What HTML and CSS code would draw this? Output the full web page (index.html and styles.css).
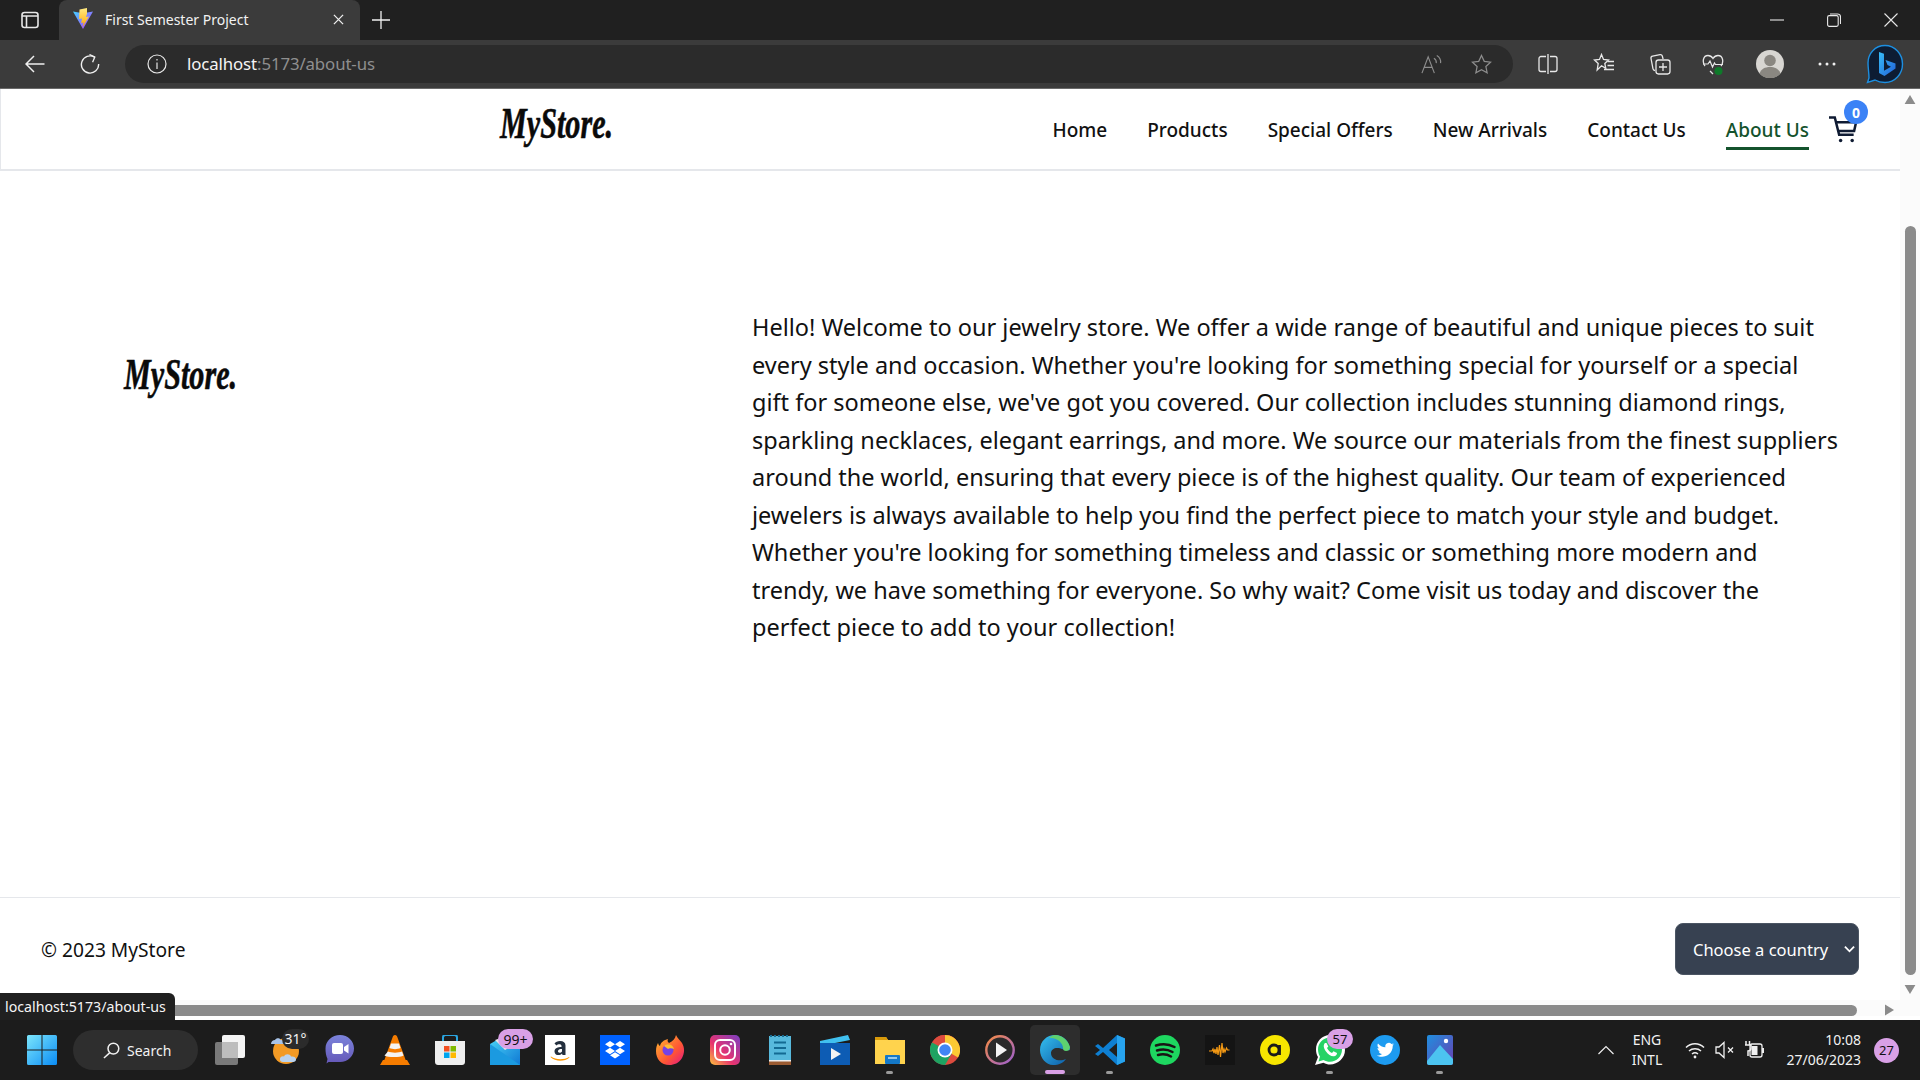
FILE: index.html
```html
<!DOCTYPE html>
<html lang="en">
<head>
<meta charset="utf-8">
<title>First Semester Project</title>
<link rel="stylesheet" href="styles.css">
</head>
<body>
<div class="browser">
  <div class="tabstrip">
    <svg class="tab-toggle" viewBox="0 0 18 18" fill="none" stroke="#e8e8e8" stroke-width="1.6"><rect x="1" y="1.5" width="16" height="15" rx="2.5"/><path d="M1 5h16M5.5 5v11" /></svg>
    <div class="tab">
      <svg class="favicon" viewBox="0 0 20 22"><defs><linearGradient id="vite1" x1="0" y1="0" x2="1" y2="1"><stop offset="0" stop-color="#41d1ff"/><stop offset="1" stop-color="#bd34fe"/></linearGradient><linearGradient id="vite2" x1="0" y1="0" x2="0" y2="1"><stop offset="0" stop-color="#ffea83"/><stop offset="1" stop-color="#ffa800"/></linearGradient></defs><path d="M0 3.5 10 21 20 3.5 10 5.2z" fill="url(#vite1)"/><path d="M14 0 6.5 1.5 6 11l3-.6-.8 4.5 2.4-.5L9.5 19 16 8.5l-3 .6 1-3.4z" fill="url(#vite2)"/></svg>
      <span class="tab-title">First Semester Project</span>
      <svg class="tab-close" viewBox="0 0 12 12" stroke="#f0f0f0" stroke-width="1.4"><path d="M1 1l10 10M11 1 1 11"/></svg>
    </div>
    <svg class="new-tab" viewBox="0 0 18 18" stroke="#f0f0f0" stroke-width="1.3"><path d="M9 0v18M0 9h18"/></svg>
    <div class="win-controls">
      <svg viewBox="0 0 14 14" stroke="#e8e8e8" stroke-width="1.1" fill="none"><path d="M0 7h14"/></svg>
      <svg viewBox="0 0 14 14" stroke="#e8e8e8" stroke-width="1.1" fill="none"><rect x="0.6" y="2.6" width="10.6" height="10.8" rx="1.6"/><path d="M3 1h7.5a3 3 0 0 1 3 3v7"/></svg>
      <svg viewBox="0 0 14 14" stroke="#e8e8e8" stroke-width="1.1" fill="none"><path d="M0.5 0.5l13 13M13.5 0.5l-13 13"/></svg>
    </div>
  </div>

  <div class="toolbar">
    <svg class="nav-btn" viewBox="0 0 20 20" stroke="#f0f0f0" stroke-width="1.5" fill="none"><path d="M19.5 10H1M9 2 1 10l8 8"/></svg>
    <svg class="nav-btn reload" viewBox="0 0 20 20" stroke="#f0f0f0" stroke-width="1.4" fill="none"><path d="M14.5 3.2A8.6 8.6 0 1 0 18.6 10"/><path d="M9.5 0.5 14.8 3l-2.2 5.2" stroke-width="1.3"/></svg>
    <div class="address">
      <svg class="info" viewBox="0 0 20 20" stroke="#e8e8e8" stroke-width="1.2" fill="none"><circle cx="10" cy="10" r="9"/><path d="M10 8.5V15"/><path d="M10 5v1.4"/></svg>
      <span class="url"><span class="url-host">localhost</span>:5173/about-us</span>
      <svg class="addr-icon read" viewBox="0 0 22 22" stroke="#8d8d8d" stroke-width="1.2" fill="none"><path d="M1 20 7.5 3 14 20M3.5 14h8"/><path d="M13.500 4.500a5 5 0 0 1 2.500 5M16.500 1.500a8 8 0 0 1 4 8"/></svg>
      <svg class="addr-icon star" viewBox="0 0 22 22" stroke="#8d8d8d" stroke-width="1.3" fill="none"><path d="M11 1.5l2.9 6.2 6.6.8-4.9 4.6 1.3 6.7L11 16.5l-5.9 3.3 1.3-6.7L1.5 8.5l6.6-.8z"/></svg>
    </div>
    <div class="tool-icons">
      <svg class="tool" viewBox="0 0 22 22" stroke="#e8e8e8" stroke-width="1.3" fill="none"><path d="M9 3.5H4a2 2 0 0 0-2 2v11a2 2 0 0 0 2 2h5M13 3.5h5a2 2 0 0 1 2 2v11a2 2 0 0 1-2 2h-5M11 1v20"/></svg>
      <svg class="tool" viewBox="0 0 22 22" stroke="#e8e8e8" stroke-width="1.3" fill="none"><path d="M8.5 1.5l2 5 5 .5-3.7 3.4 1 5-4.3-2.6-4.3 4.2 1-6.6L1.5 7l5-.5z"/><path d="M14.5 8.5H21M14.5 12.5H21M11 16.5H21"/></svg>
      <svg class="tool tool-wide" viewBox="0 0 22 22" stroke="#e8e8e8" stroke-width="1.3" fill="none"><path d="M6 17.5c-1 0-1.8-.6-2-1.6L2 5.5c-.2-1.2.5-2.2 1.6-2.4L11 1.6c1-.2 2 .4 2.3 1.4l.8 3"/><rect x="7" y="7" width="14" height="14" rx="2.4"/><path d="M14 10v8M10 14h8"/></svg>
      <svg class="tool tool-narrow" viewBox="0 0 22 22" fill="none"><path d="M3 13 C0 9 1 2.5 6 2.5c2.500 0 4 1.500 5 3 1-1.500 2.500-3 5-3 5 0 6 6.500 3 10.500M8 18l3 3" stroke="#e8e8e8" stroke-width="1.3"/><path d="M1 11h5l2-3 2.500 6 2-4 1 1.500H21" stroke="#e8e8e8" stroke-width="1.2"/><circle cx="16.500" cy="18" r="4" fill="#0e7a2a"/></svg>
      <svg class="tool avatar" viewBox="0 0 28 28"><circle cx="14" cy="14" r="14" fill="#d8d6d2"/><circle cx="14" cy="10.500" r="5.800" fill="#8a8781"/><path d="M3.500 23.500c1.500-4.500 5.500-6.500 10.500-6.500s9 2 10.500 6.500a14 14 0 0 1-21 0z" fill="#8a8781"/></svg>
      <svg class="tool dots" viewBox="0 0 20 4" fill="#f0f0f0"><circle cx="3" cy="2" r="1.500"/><circle cx="10" cy="2" r="1.500"/><circle cx="17" cy="2" r="1.500"/></svg>
      <svg class="tool bing" viewBox="0 0 38 40"><defs><linearGradient id="bg1" x1="0" y1="0" x2="1" y2="1"><stop offset="0" stop-color="#37bdf8"/><stop offset="1" stop-color="#2160d8"/></linearGradient></defs><path d="M19 1.500C9 1.500 2 9.500 2 19c0 5 1 10 1 15l-1.500 4.500L9 36c3 1.800 6 2.500 10 2.500 10 0 17.500-8.500 17.500-18.500S29 1.500 19 1.500z" fill="#0d1c33" stroke="#1d8fe0" stroke-width="1.400"/><path d="M13 8l5 1.800v17l7-4-3.500-1.700-2-5 10 3.500v5L18.500 32 13 29z" fill="url(#bg1)"/></svg>
    </div>
  </div>

  <div class="viewport">
    <div class="viewport-row">
      <div class="page">
        <header class="site-header">
          <div class="logo">MyStore.</div>
          <nav class="site-nav">
            <a class="nav-link">Home</a>
            <a class="nav-link">Products</a>
            <a class="nav-link">Special Offers</a>
            <a class="nav-link">New Arrivals</a>
            <a class="nav-link">Contact Us</a>
            <a class="nav-link active">About Us</a>
          </nav>
          <div class="cart">
            <svg class="cart-icon" viewBox="0 0 30 30" fill="none" stroke="#0f1b33" stroke-width="2.600"><path d="M0 3h6l4.500 18h15"/><path d="M7 8h21l-2 9H9.500"/><circle cx="12" cy="27" r="1.800" fill="#0f1b33" stroke="none"/><circle cx="24" cy="27" r="1.800" fill="#0f1b33" stroke="none"/></svg>
            <span class="cart-badge">0</span>
          </div>
        </header>
        <main class="about">
          <div class="logo about-logo">MyStore.</div>
          <p class="about-text">Hello! Welcome to our jewelry store. We offer a wide range of beautiful and unique pieces to suit<br>every style and occasion. Whether you're looking for something special for yourself or a special<br>gift for someone else, we've got you covered. Our collection includes stunning diamond rings,<br>sparkling necklaces, elegant earrings, and more. We source our materials from the finest suppliers<br>around the world, ensuring that every piece is of the highest quality. Our team of experienced<br>jewelers is always available to help you find the perfect piece to match your style and budget.<br>Whether you're looking for something timeless and classic or something more modern and<br>trendy, we have something for everyone. So why wait? Come visit us today and discover the<br>perfect piece to add to your collection!</p>
        </main>
        <footer class="site-footer">
          <span class="copyright">© 2023 MyStore</span>
          <div class="country-select"><span>Choose a country</span><svg class="chevron" viewBox="0 0 12 8" fill="none" stroke="#fff" stroke-width="2"><path d="M1 1.500l5 5 5-5"/></svg></div>
        </footer>
      </div>
      <div class="vscroll">
        <svg class="arrow" viewBox="0 0 12 10" fill="#8b8b8b"><path d="M6 0l6 10H0z"/></svg>
        <div class="vspacer"></div>
        <div class="vthumb"></div>
        <svg class="arrow" viewBox="0 0 12 10" fill="#8b8b8b"><path d="M0 0h12L6 10z"/></svg>
      </div>
    </div>
    <div class="hscroll">
      <div class="hthumb"></div>
      <svg class="harrow" viewBox="0 0 10 12" fill="#8b8b8b"><path d="M0 0l10 6-10 6z"/></svg>
    </div>
    <div class="status-bubble">localhost:5173/about-us</div>
  </div>

  <div class="taskbar">
    <svg class="win-logo" viewBox="0 0 30 30"><defs><linearGradient id="win" x1="0" y1="0" x2="1" y2="1"><stop offset="0" stop-color="#7ce6fb"/><stop offset="1" stop-color="#0a8cf5"/></linearGradient></defs><path d="M0 1.500A1.500 1.500 0 0 1 1.500 0h13v14.500H0zM15.500 0h13A1.500 1.500 0 0 1 30 1.500v13H15.500zM0 15.500h14.500V30h-13A1.500 1.500 0 0 1 0 28.500zM15.500 15.500H30v13a1.500 1.500 0 0 1-1.500 1.500h-13z" fill="url(#win)"/></svg>
    <div class="search-box">
      <svg class="search-icon" viewBox="0 0 18 18" fill="none" stroke="#f0f0f0" stroke-width="1.600"><circle cx="11" cy="7" r="5.700"/><path d="M7 11.500 1 17"/></svg>
      <span>Search</span>
    </div>
    <div class="apps">
      <div class="app"><svg viewBox="0 0 30 30"><rect x="7" y="0" width="23" height="23" rx="2" fill="#f4f4f4"/><rect x="0" y="7" width="23" height="23" rx="2" fill="#8a8a8a" opacity=".85"/><rect x="7" y="7" width="16" height="16" fill="#bdbdbd"/></svg></div>
      <div class="app"><svg viewBox="0 0 30 30"><circle cx="16" cy="16" r="13" fill="#f29a25"/><path d="M1 9c0-2.500 2-4 4-4 1-2.500 5-2.500 6 0 2 0 3.500 1.500 3.500 4z" fill="#a8c3e8"/><path d="M13 27c-2 0-3.500-1.500-3-3.500.5-2 2.500-2.500 4-2 1-3 6-3 7 0 2.500-.5 5 .5 5 3 0 1.500-1 2.500-3 2.500z" fill="#b9d2ee"/></svg><span class="temp">31°</span></div>
      <div class="app"><svg viewBox="0 0 30 30"><defs><linearGradient id="teams" x1="0" y1="0" x2="0" y2="1"><stop offset="0" stop-color="#7b83db"/><stop offset="1" stop-color="#6558b8"/></linearGradient></defs><path d="M15 0c8 0 14 6 14 13.500S23 27 15 27H3.500l-2 1.500 1-4.500C1 21 .5 17 .5 13.500.5 6 7 0 15 0z" fill="url(#teams)"/><rect x="7" y="8" width="11" height="11" rx="2" fill="#fff"/><path d="M19 12l4.500-3v9.500L19 15.500z" fill="#fff"/></svg></div>
      <div class="app"><svg viewBox="0 0 30 30"><path d="M15 0c1.500 0 2 1 2.500 2.500L26 26H4l8.500-23.500C13 1 13.500 0 15 0z" fill="#f57c00"/><path d="M11 8.500h8l1.500 4.500c-3 1.500-8 1.500-11 0zM8 16.500c3 1.500 11 1.500 14 0l1.500 4c-3 2-16 2-19 0z" fill="#f4f4f4"/><path d="M0 30l3-5h24l3 5z" fill="#f57c00"/></svg></div>
      <div class="app"><svg viewBox="0 0 30 30"><path d="M8 6V2.500C8 1 9 0 10.500 0h9C21 0 22 1 22 2.500V6" fill="none" stroke="#2aa5e0" stroke-width="2"/><path d="M0 6h30v21c0 1.700-1.300 3-3 3H3c-1.700 0-3-1.300-3-3z" fill="#efefef"/><rect x="9" y="11" width="5.500" height="5.500" fill="#f25022"/><rect x="15.500" y="11" width="5.500" height="5.500" fill="#7fba00"/><rect x="9" y="17.500" width="5.500" height="5.500" fill="#00a4ef"/><rect x="15.500" y="17.500" width="5.500" height="5.500" fill="#ffb900"/></svg></div>
      <div class="app"><svg viewBox="0 0 30 30"><defs><linearGradient id="mail" x1="0" y1="0" x2="1" y2="1"><stop offset="0" stop-color="#4ad5f7"/><stop offset="1" stop-color="#0f78d4"/></linearGradient></defs><path d="M0 9 12 2l18 7v21H0z" fill="url(#mail)"/><path d="M5 5l12-4 8 8-10 6z" fill="#e8e8e8"/><path d="M0 9l30 21H0z" fill="#1b9ae0"/></svg><span class="badge badge-mail">99+</span></div>
      <div class="app"><svg viewBox="0 0 30 30"><rect width="30" height="30" fill="#fff"/><path d="M15 6c3.500 0 5.500 1.500 5.500 4.500V20h-3l-.5-1.500c-2 2.500-7.500 2.300-7.500-2 0-3.500 3.500-4.500 7-4.500v-1c0-2.500-4-2-5-.5L9.500 8.500C10.500 7 12.500 6 15 6zm2 8c-2.500 0-4 .5-4 2.300 0 2 3 1.700 4 .2z" fill="#232f3e"/><path d="M6 21.500c5 3.500 13 3.500 18 .5l.5.5c-5 4.500-14 4.500-19-.5z" fill="#f90"/></svg></div>
      <div class="app"><svg viewBox="0 0 30 30"><rect width="30" height="30" fill="#0061fe"/><path d="M10 6l5 3.200-5 3.200-5-3.200zM20 6l5 3.200-5 3.200-5-3.200zM10 12.800l5 3.200-5 3.200-5-3.200zM20 12.800l5 3.200-5 3.200-5-3.200zM10 20.200l5-3 5 3-5 3.200z" fill="#fff"/></svg></div>
      <div class="app"><svg viewBox="0 0 30 30"><defs><linearGradient id="ff" x1="0" y1="0" x2="1" y2="1"><stop offset="0" stop-color="#ffbd2e"/><stop offset=".6" stop-color="#ff5634"/><stop offset="1" stop-color="#e31587"/></linearGradient></defs><path d="M21 0c1 3 4 5 6 8 3 5 2.500 10.500 0 15-3 5-8 7-12.500 7C6 30 1 24 1 16c0-4 1-6 2-8 .5 1.500 1 2.500 2 3 1-4 4-6 8-7-1 2 0 3 1 4 4-2 6-4 7-8z" fill="url(#ff)"/><circle cx="13" cy="15" r="5.500" fill="#7542e5"/><path d="M9 11c3-3 9-2 10 3-2-1-5-1-6 0z" fill="#ffbd2e"/></svg></div>
      <div class="app"><svg viewBox="0 0 30 30"><defs><linearGradient id="ig" x1="0" y1="1" x2="1" y2="0"><stop offset="0" stop-color="#fdc33c"/><stop offset=".4" stop-color="#e8336f"/><stop offset="1" stop-color="#7a3fc4"/></linearGradient></defs><rect width="30" height="30" rx="5" fill="url(#ig)"/><rect x="5" y="5" width="20" height="20" rx="5" fill="none" stroke="#fff" stroke-width="2"/><circle cx="15" cy="15" r="4.800" fill="none" stroke="#fff" stroke-width="2"/><circle cx="21" cy="9" r="1.300" fill="#fff"/></svg></div>
      <div class="app"><svg viewBox="0 0 22 30"><rect width="22" height="28" y="1" fill="#57b9dc"/><rect y="26" width="22" height="4" fill="#9a5b32"/><path d="M0 25h22v1.500H0z" fill="#eee"/><path d="M1 1h2M5 1h2M9 1h2M13 1h2M17 1h2" stroke="#1a6d92" stroke-width="2"/><path d="M5 7.500h12M5 13h12M5 18.500h12" stroke="#136a92" stroke-width="2"/></svg></div>
      <div class="app"><svg viewBox="0 0 30 30"><path d="M0 6 28 0l2 5-30 6z" fill="#40c0ef"/><path d="M0 8h30v22H0z" fill="#0d5cb4"/><path d="M11 13l10 6-10 6z" fill="#f4f4f4"/></svg></div>
      <div class="app running"><svg viewBox="0 0 30 30"><path d="M0 2h11l2 3h17v24H0z" fill="#ffd34d"/><path d="M0 2h11l2 3H0z" fill="#d99a0a"/><rect x="10" y="20" width="15" height="9" rx="1" fill="#1478c8"/><path d="M13 23h9" stroke="#bfe3f8" stroke-width="1.500"/></svg></div>
      <div class="app"><svg viewBox="0 0 30 30"><circle cx="15" cy="15" r="15" fill="#dd4b3e"/><path d="M15 15 28 7.500A15 15 0 0 0 2 7.500z" fill="#dd4b3e"/><path d="M15 0a15 15 0 0 1 13 22.500L15 15z" fill="#fcc934"/><path d="M2 7.500a15 15 0 0 0 13 22.500l7-12z" fill="#1ea362"/><circle cx="15" cy="15" r="7.500" fill="#fff"/><circle cx="15" cy="15" r="5.800" fill="#4285f4"/></svg></div>
      <div class="app"><svg viewBox="0 0 30 30"><defs><linearGradient id="pl" x1="0" y1="0" x2="1" y2="1"><stop offset="0" stop-color="#f58b45"/><stop offset="1" stop-color="#9b5fd0"/></linearGradient></defs><circle cx="15" cy="15" r="13.700" fill="#2a2a2a" stroke="url(#pl)" stroke-width="2.400"/><path d="M11 7.500l11 7.500-11 7.500z" fill="#f4f4f4"/></svg></div>
      <div class="app active-app"><svg viewBox="0 0 30 30"><defs><linearGradient id="edge" x1="0" y1="0" x2="1" y2="1"><stop offset="0" stop-color="#35c1f1"/><stop offset="1" stop-color="#0c59a4"/></linearGradient></defs><path d="M15 0C7 0 0 6 0 15c0 8 6 15 13 15 6 0 10-2 13-6-6 3-15 1-15-6 0-3 3-5 6-5 6 0 6 3 13 2C30 7 24 0 15 0z" fill="url(#edge)"/><path d="M15 0c7 0 13 5 15 12 0 3-2 4-4 4-2 0-3-1-3-3 0-5-6-11-14-10 2-2 4-3 6-3z" fill="#5ed16f"/></svg></div>
      <div class="app running"><svg viewBox="0 0 30 30"><path d="M22 0l8 3.500v23L22 30 8 17l-5 4-3-2 5-4-5-4 3-2 5 4z" fill="#0e7fd2"/><path d="M22 8l-8 7 8 7z" fill="#1f1f1f"/><path d="M22 0l8 3.500v23L22 30z" fill="#27a3ee"/></svg></div>
      <div class="app"><svg viewBox="0 0 30 30"><circle cx="15" cy="15" r="15" fill="#1ed760"/><path d="M6 10.500c6-2 13-1.500 18.500 1.500M7 15.500c5-1.500 11-1 15.500 1.500M8 20c4-1 9-.8 13 1.500" fill="none" stroke="#191414" stroke-width="2.500" stroke-linecap="round"/></svg></div>
      <div class="app"><svg viewBox="0 0 30 30"><rect width="30" height="30" fill="#141414"/><path d="M4 16h3l1-2 1 4 1-4 1 5 1-7 1 8 1.500-10 1 12 1.500-14 1 10 1-4 1 3 1.500-4 1 2h2" fill="none" stroke="#f59a14" stroke-width="1.200"/></svg></div>
      <div class="app"><svg viewBox="0 0 30 30"><circle cx="15" cy="15" r="15" fill="#f7e600"/><circle cx="14" cy="15" r="5" fill="none" stroke="#1a1a1a" stroke-width="2.800"/><path d="M19.500 10v10" stroke="#1a1a1a" stroke-width="2.800"/></svg></div>
      <div class="app running"><svg viewBox="0 0 30 30"><path d="M15 0C7 0 1 6.500 1 14.500c0 3 .8 5.500 2 7.500L0 30l8.500-2.300c2 1.200 4.200 1.800 6.500 1.800 8 0 15-6.500 15-14.500S23 0 15 0z" fill="#fff"/><path d="M15 2.500c-6.500 0-12 5.300-12 12 0 2.500.8 5 2 7l-1.500 5 5-1.500c2 1.200 4.300 1.800 6.500 1.800 6.500 0 12-5.500 12-12.300S21.500 2.500 15 2.500z" fill="#25d366"/><path d="M10 8c-2 2-1.500 5 1 8.500s6 5.500 9 4.500c1.500-.5 2-2 2-3l-3.500-1.800-1.500 1.800c-2-.8-4-3-5-5l1.300-1.500L11.500 8z" fill="#fff"/></svg><span class="badge badge-wa">57</span></div>
      <div class="app"><svg viewBox="0 0 30 30"><circle cx="15" cy="15" r="15" fill="#1d9bf0"/><path d="M24 9.500c-.7.300-1.400.5-2 .6.700-.4 1.300-1.100 1.600-1.900-.7.400-1.400.7-2.200.9a3.500 3.500 0 0 0-6 3.200C12.500 12.100 9.800 10.700 8 8.500c-1 1.700-.5 3.800 1.100 4.800-.6 0-1.100-.2-1.600-.4 0 1.700 1.200 3.200 2.800 3.500-.5.100-1 .2-1.600.1.500 1.400 1.800 2.400 3.300 2.400-1.500 1.200-3.400 1.700-5.200 1.500 5 3.200 15.900 1.300 16-9.800.7-.4 1.300-1 1.800-1.600z" fill="#fff"/></svg></div>
      <div class="app running"><svg viewBox="0 0 30 30"><defs><linearGradient id="ph" x1="0" y1="0" x2="1" y2="1"><stop offset="0" stop-color="#1f8fe0"/><stop offset="1" stop-color="#6a3fb0"/></linearGradient></defs><rect width="26" height="30" x="2" rx="2" fill="url(#ph)"/><path d="M2 26 15 10l13 14v4c0 1-1 2-2 2H4c-1 0-2-1-2-2z" fill="#4cc4f0"/><circle cx="21" cy="6" r="2.200" fill="#fff"/></svg></div>
    </div>
    <div class="tray">
      <svg class="tray-chevron" viewBox="0 0 16 10" fill="none" stroke="#eee" stroke-width="1.200"><path d="M0.500 9 8 1.500 15.500 9"/></svg>
      <div class="lang"><span>ENG</span><span>INTL</span></div>
      <div class="tray-icons">
        <svg viewBox="0 0 20 18" fill="none" stroke="#f0f0f0" stroke-width="1.500"><path d="M1 6.500c5-5 13-5 18 0M4 10c3.300-3 8.700-3 12 0M7 13c1.700-1.300 4.300-1.300 6 0"/><circle cx="10" cy="16" r="1.400" fill="#f0f0f0" stroke="none"/></svg>
        <svg viewBox="0 0 20 18" fill="none" stroke="#f0f0f0" stroke-width="1.300"><path d="M1 6h3l5-4.500v15L4 12H1z"/><path d="M13 6.500l5 5M18 6.500l-5 5"/></svg>
        <svg viewBox="0 0 20 18" fill="none" stroke="#f0f0f0" stroke-width="1.300"><rect x="5" y="3" width="12" height="13" rx="2" /><rect x="6.500" y="5" width="6" height="9" fill="#f0f0f0" stroke="none"/><path d="M18 7v5" stroke-width="2"/><path d="M1 0v4M4.500 0v4M0 4h6v3c0 2-1 3-3 3v5" stroke-width="1.500"/></svg>
      </div>
      <div class="clock"><span>10:08</span><span>27/06/2023</span></div>
      <span class="notif">27</span>
    </div>
  </div>
</div>
</body>
</html>
```

FILE: styles.css
```css
* { box-sizing: border-box; }
html, body { margin: 0; padding: 0; }
body { font-family: "Noto Sans", "Open Sans", sans-serif; color: #111; overflow: hidden; }
svg { display: block; flex: none; }

.browser { width: 1920px; height: 1080px; display: flex; flex-direction: column; overflow: hidden; background: #fff; }

/* tab strip */
.tabstrip { height: 40px; background: #202020; display: flex; align-items: center; padding-left: 21px; flex: none; }
.tab-toggle { width: 18px; height: 18px; margin-right: 20px; }
.tab { width: 301px; height: 40px; background: #3b3b3b; border-radius: 8px 8px 0 0; display: flex; align-items: center; padding: 0 16px 2px 14px; color: #f2f2f2; }
.favicon { width: 20px; height: 22px; margin-right: 12px; }
.tab-title { font-size: 14px; flex: 1; }
.tab-close { width: 11px; height: 11px; }
.new-tab { width: 18px; height: 18px; margin-left: 12px; }
.win-controls { margin-left: auto; display: flex; align-items: center; gap: 43px; padding-right: 22px; }
.win-controls svg { width: 14px; height: 14px; }

/* toolbar */
.toolbar { height: 49px; background: #3b3b3b; border-bottom: 1px solid #6a6a6a; display: flex; align-items: center; padding-left: 25px; flex: none; }
.nav-btn { width: 20px; height: 20px; }
.reload { margin-left: 35px; }
.address { width: 1388px; height: 38px; margin-left: 25px; background: #2b2b2b; border-radius: 19px; display: flex; align-items: center; padding-left: 22px; }
.info { width: 20px; height: 20px; }
.url { font-size: 16.8px; line-height: 24px; color: #8f8f8f; margin-left: 20px; margin-bottom: 1px; letter-spacing: -0.1px; flex: 1; }
.url-host { color: #f5f5f5; }
.addr-icon { width: 21px; height: 21px; }
.read { margin-right: 29px; }
.star { margin-right: 21px; }
.tool-icons { display: flex; align-items: center; margin-left: 24px; }
.tool { width: 22px; height: 22px; margin-right: 34px; }
.tool-wide { margin-right: 31px; }
.tool-narrow { margin-right: 32px; }
.avatar { width: 28px; height: 28px; margin-right: 33px; }
.dots { width: 20px; height: 4px; margin-right: 29px; }
.bing { width: 38px; height: 40px; margin-right: 0; }

/* page */
.viewport { position: relative; height: 931px; display: flex; flex-direction: column; flex: none; }
.viewport-row { height: 911px; display: flex; flex: none; }
.page { width: 1900px; display: flex; flex-direction: column; }

.site-header { height: 82px; border-bottom: 2px solid #e5e7eb; border-left: 1px solid #e5e7eb; display: flex; align-items: flex-start; padding-left: 499px; flex: none; }
.logo { width: 114px; height: 54px; margin-top: 7px; flex: none; font-family: "Liberation Serif", serif; font-weight: 700; font-style: italic; font-size: 45px; line-height: 54px; color: #0a0a0a; white-space: nowrap; -webkit-text-stroke: .6px #0a0a0a; transform: scaleX(.67); transform-origin: left center; }

.site-nav { margin-left: auto; display: flex; gap: 40px; padding-top: 28px; }
.nav-link { font-size: 19px; font-weight: 500; line-height: 27px; padding-bottom: 3px; color: #111; border-bottom: 3px solid transparent; }
.nav-link.active { color: #14532d; border-bottom-color: #14532d; }
.cart { position: relative; margin-left: 20px; margin-right: 42px; margin-top: 25px; width: 29px; }
.cart-icon { width: 29px; height: 30px; }
.cart-badge { position: absolute; left: 15px; top: -14px; width: 24px; height: 24px; border-radius: 50%; background: #3b82f6; color: #fff; font-size: 14px; font-weight: 700; display: flex; align-items: center; justify-content: center; }

.about { flex: 1; display: flex; align-items: flex-start; padding-left: 124px; }
.about-logo { margin-top: 176px; margin-right: 514px; }
.about-text { margin: 138.4px 0 0; font-size: 23.5px; line-height: 37.5px; white-space: nowrap; color: #111; }

.site-footer { height: 103px; border-top: 1px solid #e5e7eb; display: flex; align-items: center; justify-content: space-between; padding: 0 41px; flex: none; }
.copyright { font-size: 19.2px; }
.country-select { width: 184px; height: 52px; background: #374151; border: 1px solid #4b5563; border-radius: 8px; color: #fff; font-size: 16.5px; display: flex; align-items: center; justify-content: space-between; padding: 0 3px 0 17px; }
.chevron { width: 11px; height: 8px; }

.vscroll { width: 20px; background: #fbfbfb; display: flex; flex-direction: column; align-items: center; padding: 6px 0 6px; }
.arrow { width: 12px; height: 9px; }
.vspacer { height: 122px; }
.vthumb { width: 11px; height: 749px; background: #8b8b8b; border-radius: 6px; margin-bottom: 10px; }

.hscroll { height: 20px; background: #fbfbfb; display: flex; align-items: center; border-bottom: 4px solid #fff; padding-top: 4px; flex: none; }
.hthumb { width: 1857px; height: 11px; background: #8b8b8b; border-radius: 0 6px 6px 0; }
.harrow { width: 9px; height: 12px; margin-left: 28px; }

.status-bubble { position: absolute; left: 0; bottom: 0; height: 27px; width: 175px; background: #202020; color: #f5f5f5; font-size: 14.2px; line-height: 27px; padding-left: 5px; border-radius: 0 6px 0 0; }

/* taskbar */
.taskbar { height: 60px; background: #1c1c1c; display: flex; align-items: center; padding-left: 27px; color: #f2f2f2; flex: none; }
.win-logo { width: 30px; height: 30px; }
.search-box { width: 125px; height: 40px; margin-left: 16px; background: #2e2e2e; border-radius: 20px; display: flex; align-items: center; padding-left: 30px; font-size: 14px; gap: 7px; }
.search-icon { width: 17px; height: 17px; }
.apps { display: flex; margin-left: 4px; height: 60px; align-items: center; }
.app { position: relative; width: 55px; height: 60px; display: flex; align-items: center; justify-content: center; }
.app svg { width: 30px; height: 30px; }
.running::after { content: ""; position: absolute; left: 24px; bottom: 6px; width: 7px; height: 3px; border-radius: 2px; background: #9a9a9a; }
.active-app::before { content: ""; position: absolute; left: 3px; top: 5px; width: 50px; height: 50px; border-radius: 5px; background: #2d2d2d; }
.active-app svg { position: relative; }
.active-app::after { content: ""; position: absolute; left: 18px; bottom: 6px; width: 20px; height: 4px; border-radius: 2px; background: #d9a0e6; }
.temp { position: absolute; left: 25px; top: 9px; width: 27px; height: 20px; border-radius: 10px; background: #2b2b2b; font-size: 14px; line-height: 20px; text-align: center; }
.badge { position: absolute; background: #d9a0e6; color: #111; font-size: 14px; border-radius: 12px; display: flex; align-items: center; justify-content: center; }
.badge-mail { left: 21px; top: 9px; width: 35px; height: 20px; }
.badge-wa { left: 25px; top: 9px; width: 26px; height: 20px; font-size: 13px; }

.tray { margin-left: auto; display: flex; align-items: center; padding-right: 21px; }
.tray-chevron { width: 16px; height: 10px; }
.lang { display: flex; flex-direction: column; align-items: center; font-size: 14px; line-height: 20px; margin-left: 8px; width: 50px; }
.tray-icons { display: flex; gap: 10px; margin-left: 13px; }
.tray-icons svg { width: 20px; height: 18px; }
.clock { display: flex; flex-direction: column; align-items: flex-end; font-size: 14px; line-height: 20px; margin-left: 4px; width: 92px; }
.notif { width: 25px; height: 25px; border-radius: 50%; background: #d9a0e6; color: #111; font-size: 13px; display: flex; align-items: center; justify-content: center; margin-left: 13px; }
```
